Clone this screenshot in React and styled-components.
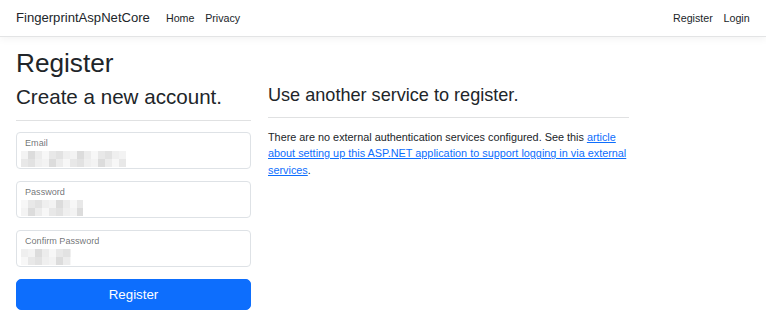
import styled, { createGlobalStyle } from "styled-components";

const GlobalStyle = createGlobalStyle`
    html, body {
        margin: 0;
        padding: 0;
        background: #fff;
    }
    body {
        font-family: "Liberation Sans", Arial, sans-serif;
        font-size: 10.7px;
        line-height: 1.5;
        color: #212529;
    }
    * {
        box-sizing: border-box;
    }
`;

const NavBar = styled.nav`
    height: 37px;
    display: flex;
    align-items: center;
    justify-content: space-between;
    padding: 0 11px 0 16px;
    border-bottom: 1px solid #e3e4e5;
    box-shadow: 0 2px 8px rgba(0, 0, 0, 0.05);
    margin-bottom: 10px;
`;

const NavGroup = styled.div`
    display: flex;
    align-items: center;
`;

const Brand = styled.a`
    font-size: 13.1px;
    color: #212529;
    text-decoration: none;
    margin-right: 10.7px;
`;

const NavLink = styled.a`
    font-size: 10.7px;
    color: #212529;
    text-decoration: none;
    padding: 0 5.35px;
`;

const Main = styled.main`
    padding: 0 16px;
`;

const PageTitle = styled.h1`
    font-size: 26.2px;
    font-weight: 500;
    line-height: 1.25;
    margin: 0 0 5.3px;
`;

const Row = styled.div`
    display: grid;
    grid-template-columns: 235px 361px;
    column-gap: 17px;
    align-items: start;
`;

const Heading = styled.h2`
    font-size: ${p => p.$size}px;
    font-weight: 500;
    line-height: 1.2;
    margin: 0;
`;

const Rule = styled.hr`
    border: 0;
    border-top: 1px solid #e0e1e2;
    margin: 10.7px 0;
`;

const Field = styled.div`
    position: relative;
    height: 37px;
    border: 1px solid #dee2e6;
    border-radius: 4px;
    margin-bottom: 12px;
    padding: 5px 8px 0 8px;
`;

const FieldLabel = styled.label`
    display: block;
    font-size: 9.1px;
    line-height: 1.3;
    color: rgba(33, 37, 41, 0.65);
`;

const Value = styled.svg`
    display: block;
    margin: 1px 0 0 -4px;
`;

const SubmitButton = styled.button`
    width: 100%;
    height: 31px;
    border: 1px solid #0d6efd;
    border-radius: 5px;
    background: #0d6efd;
    color: #fff;
    font-family: inherit;
    font-size: 13.3px;
    cursor: pointer;
`;

const Text = styled.p`
    margin: 0;
    font-size: 10.85px;
    white-space: nowrap;
`;

const Link = styled.a`
    color: #0d6efd;
    text-decoration: underline;
`;

const greys = ["#ececec", "#f3f3f3", "#e2e2e2", "#f7f7f7", "#dcdcdc", "#efefef", "#e8e8e8"];

// blurred / pixelated input value
const Redacted = ({ width, seed }) => {
    const cells = [];
    const cols = Math.ceil(width / 7);
    for (let r = 0; r < 2; r++) {
        for (let c = 0; c < cols; c++) {
            const g = greys[(c * 3 + r * 5 + seed) % greys.length];
            cells.push(<rect key={r + "-" + c} x={c * 7} y={r * 8} width="7" height="8" fill={g} />);
        }
    }
    return (
        <Value width={width} height="16" viewBox={`0 0 ${width} 16`}>
            {cells}
        </Value>
    );
};

const FloatingField = ({ label, valueWidth, seed }) => (
    <Field>
        <FieldLabel>{label}</FieldLabel>
        <Redacted width={valueWidth} seed={seed} />
    </Field>
);

export default function App() {
    return (
        <>
            <GlobalStyle />
            <NavBar>
                <NavGroup>
                    <Brand href="#">FingerprintAspNetCore</Brand>
                    <NavLink href="#">Home</NavLink>
                    <NavLink href="#">Privacy</NavLink>
                </NavGroup>
                <NavGroup>
                    <NavLink href="#">Register</NavLink>
                    <NavLink href="#">Login</NavLink>
                </NavGroup>
            </NavBar>
            <Main>
                <PageTitle>Register</PageTitle>
                <Row>
                    <form onSubmit={e => e.preventDefault()}>
                        <Heading $size={20.6}>Create a new account.</Heading>
                        <Rule />
                        <FloatingField label="Email" valueWidth={105} seed={1} />
                        <FloatingField label="Password" valueWidth={62} seed={3} />
                        <FloatingField label="Confirm Password" valueWidth={50} seed={5} />
                        <SubmitButton type="submit">Register</SubmitButton>
                    </form>
                    <section>
                        <Heading as="h3" $size={18.1}>Use another service to register.</Heading>
                        <Rule />
                        <Text>
                            There are no external authentication services configured. See this <Link href="#">article</Link>
                            <br />
                            <Link href="#">about setting up this ASP.NET application to support logging in via external</Link>
                            <br />
                            <Link href="#">services</Link>.
                        </Text>
                    </section>
                </Row>
            </Main>
        </>
    );
}
